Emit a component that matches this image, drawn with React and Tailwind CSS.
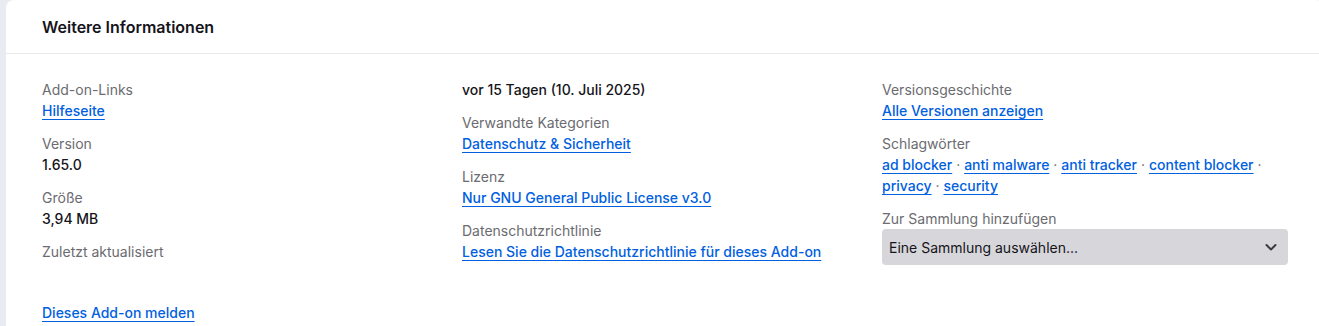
import React from "react";

const Label = ({ children }) => (
  <div className="text-[14px] leading-[21px] text-[#6b6b70]">{children}</div>
);
const Value = ({ children }) => (
  <div className="text-[14px] leading-[21px] font-medium text-[#15141a]">{children}</div>
);
const A = ({ children }) => (
  <a href="#" className="text-[14px] leading-[21px] font-medium text-[#0060df] underline underline-offset-[3px] decoration-1">
    {children}
  </a>
);
const LinkRow = ({ children }) => (
  <div className="text-[14px] leading-[21px]"><A>{children}</A></div>
);
const Group = ({ children }) => <div className="flex flex-col">{children}</div>;

export default function App() {
  const tags = ["ad blocker", "anti malware", "anti tracker", "content blocker", "privacy", "security"];
  return (
    <div className="w-[1319px] h-[326px] overflow-hidden bg-[#e8ebef]" style={{ fontFamily: "Inter, 'Noto Sans', sans-serif" }}>
      <div className="ml-[6px] w-[1318px] h-[340px] bg-white rounded-t-[8px]">
        <div className="h-[54px] border-b border-[#e9e9ec] pl-[36px] flex items-center">
          <h2 className="text-[16px] font-semibold text-[#15141a]">Weitere Informationen</h2>
        </div>
        <div className="px-[36px] pt-[25px]">
          <div className="grid grid-cols-3 gap-x-[14px] items-start">
            <div className="flex flex-col gap-[12px]">
              <Group>
                <Label>Add-on-Links</Label>
                <LinkRow>Hilfeseite</LinkRow>
              </Group>
              <Group>
                <Label>Version</Label>
                <Value>1.65.0</Value>
              </Group>
              <Group>
                <Label>Größe</Label>
                <Value>3,94 MB</Value>
              </Group>
              <Group>
                <Label>Zuletzt aktualisiert</Label>
              </Group>
            </div>
            <div className="flex flex-col gap-[12px]">
              <Group>
                <Value>vor 15 Tagen (10. Juli 2025)</Value>
              </Group>
              <Group>
                <Label>Verwandte Kategorien</Label>
                <LinkRow>Datenschutz &amp; Sicherheit</LinkRow>
              </Group>
              <Group>
                <Label>Lizenz</Label>
                <LinkRow>Nur GNU General Public License v3.0</LinkRow>
              </Group>
              <Group>
                <Label>Datenschutzrichtlinie</Label>
                <LinkRow>Lesen Sie die Datenschutzrichtlinie für dieses Add-on</LinkRow>
              </Group>
            </div>
            <div className="flex flex-col gap-[12px]">
              <Group>
                <Label>Versionsgeschichte</Label>
                <LinkRow>Alle Versionen anzeigen</LinkRow>
              </Group>
              <Group>
                <Label>Schlagwörter</Label>
                <div className="text-[14px] leading-[21px] text-[#6b6b70]">
                  {tags.map((t, i) => (
                    <React.Fragment key={t}>
                      <A>{t}</A>
                      {i < tags.length - 1 && <span> · </span>}
                    </React.Fragment>
                  ))}
                </div>
              </Group>
              <Group>
                <Label>Zur Sammlung hinzufügen</Label>
                <div className="h-[36px] rounded-[4px] bg-[#d7d7db] flex items-center justify-between pl-[7px] pr-[9px]">
                  <span className="text-[14px] text-[#15141a]">Eine Sammlung auswählen...</span>
                  <svg width="16" height="16" viewBox="0 0 16 16" fill="none" stroke="#3a3a40" strokeWidth="2" strokeLinecap="round" strokeLinejoin="round">
                    <path d="M3.5 6 8 10.5 12.5 6" />
                  </svg>
                </div>
              </Group>
            </div>
          </div>
          <div className="mt-[37px]">
            <LinkRow>Dieses Add-on melden</LinkRow>
          </div>
        </div>
      </div>
    </div>
  );
}
